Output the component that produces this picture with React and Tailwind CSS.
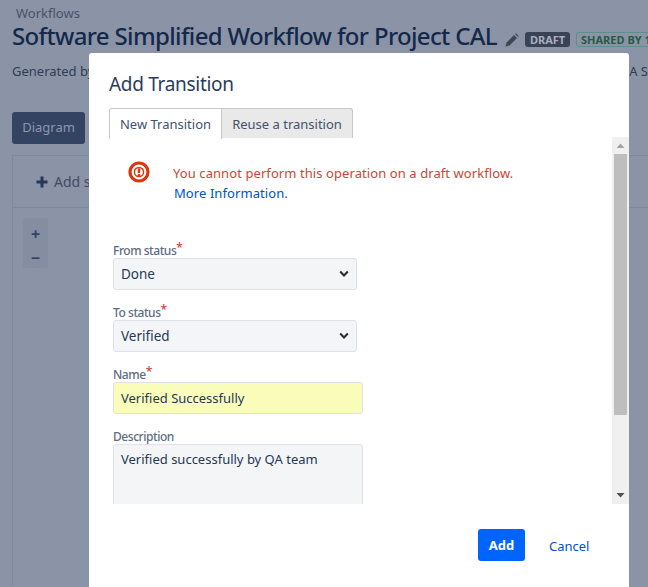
import React from "react";

const font = { fontFamily: '"Noto Sans", sans-serif' };

function Label({ children, required }) {
  return (
    <div className="h-[20px] pt-[5px] flex items-start text-[12px] leading-[15px] font-medium text-[#5e6c84] tracking-[-0.45px]">
      <span>{children}</span>
      {required && <span className="text-[#d04437] text-[12px] leading-[12px] -mt-[1px]">*</span>}
    </div>
  );
}

function Select({ value }) {
  return (
    <div className="w-[244px] h-[32px] bg-[#f4f5f7] border border-[#dfe1e6] rounded-[3px] flex items-center justify-between pl-[7px] pr-[7px] text-[13.5px] text-[#253858]">
      <span>{value}</span>
      <svg width="10" height="8" viewBox="0 0 10 8">
        <path d="M1.2 1.5 L5 5.5 L8.8 1.5" fill="none" stroke="#2b2b2b" strokeWidth="2" />
      </svg>
    </div>
  );
}

export default function App() {
  return (
    <div style={font} className="relative w-[648px] h-[587px] overflow-hidden bg-[#8b94a7]">
      <div className="pl-[12px] pt-[5px]">
        <div className="pl-[4px] text-[13px] leading-[16px] text-[#46526a]">Workflows</div>
        <div className="flex items-center h-[30px] whitespace-nowrap">
          <span className="shrink-0 text-[24px] leading-[30px] font-medium text-[#14284a] tracking-[-0.65px]">Software Simplified Workflow for Project CAL</span>
          <svg className="shrink-0 ml-[8px] mt-[8px]" width="14" height="14" viewBox="0 0 14 14">
            <path d="M0.5 13.5 L1.5 9.5 L9 2 L12 5 L4.5 12.5 Z M10 1 L11 0.3 L13.7 3 L13 4 Z" fill="#3f4657" />
          </svg>
          <span className="shrink-0 ml-[6px] mt-[7px] w-[45px] text-center h-[15px] rounded-[3px] bg-[#3a4356] text-[#a9b0bf] text-[11px] leading-[15px] font-bold">DRAFT</span>
          <span className="shrink-0 ml-[6px] mt-[7px] px-[4px] h-[15px] rounded-[3px] border border-[#5f8f8a] text-[#1f5c45] text-[11px] leading-[13px] font-bold">SHARED BY 1</span>
        </div>
        <div className="flex justify-between mt-[11px] text-[13px] leading-[18px] text-[#2f3c55] whitespace-nowrap">
          <span>Generated by</span>
          <span>A S</span>
        </div>
        <div className="mt-[32px] w-[73px] h-[32px] rounded-[3px] bg-[#334463] text-[#8d97ab] text-[13px] leading-[30px] text-center">Diagram</div>
      </div>
      <div className="mt-[11px] ml-[12px] h-[434px] border border-[#7f899c] border-r-0">
        <div className="h-[52px] border-b border-[#7f899c] flex items-center pl-[23px] text-[14px] text-[#3f4b63] whitespace-nowrap">
          <svg className="mr-[6px]" width="12" height="12" viewBox="0 0 12 12">
            <path d="M4.5 0.5h3v4h4v3h-4v4h-3v-4h-4v-3h4z" fill="#253858" />
          </svg>
          Add status
        </div>
        <div className="ml-[10px] mt-[10px] w-[25px] h-[50px] rounded-[3px] bg-[#858ea1] flex flex-col items-center gap-[6px] pt-[7px] text-[#2f4468] text-[16px] leading-[18px] font-bold">
          <span>+</span>
          <span>−</span>
        </div>
      </div>

      <div className="absolute left-[89px] top-[53px] w-[540px] h-[560px] bg-white rounded-t-[3px] flex flex-col">
        <div className="pl-[20px] pt-[17px] text-[19px] leading-[28px] text-[#2a3c5c] tracking-[-0.3px]">Add Transition</div>
        <div className="pl-[20px] pt-[10px] flex h-[40px] text-[13px]">
          <div className="w-[113px] h-[31px] border border-[#c8c8c8] border-b-0 rounded-tl-[3px] bg-white text-[#42526e] text-center leading-[30px]">New Transition</div>
          <div className="w-[131px] h-[30px] border border-l-0 border-[#c8c8c8] border-b-0 rounded-tr-[3px] bg-[#e9e9e9] text-[#42526e] text-center leading-[30px]">Reuse a transition</div>
        </div>
        <div className="relative h-[367px] -mt-[1px] overflow-hidden">
          <div className="flex pl-[39px] pt-[24px]">
            <svg width="22" height="22" viewBox="0 0 22 22" className="shrink-0">
              <circle cx="11" cy="11" r="9" fill="none" stroke="#de350b" strokeWidth="3.2" />
              <circle cx="11" cy="11" r="4.6" fill="none" stroke="#de350b" strokeWidth="1.5" />
              <rect x="9.8" y="7.4" width="2.4" height="4.6" fill="#de350b" />
              <rect x="9.8" y="13" width="2.4" height="1.9" fill="#de350b" />
            </svg>
            <div className="ml-[23px] pt-[2px] text-[13px] leading-[20px] tracking-[0.08px] whitespace-nowrap">
              <div className="text-[#d04437]">You cannot perform this operation on a draft workflow.</div>
              <div className="pl-[1px] text-[#0052cc]">More Information.</div>
            </div>
          </div>
          <div className="pl-[24px] pt-[35px]">
            <Label required>From status</Label>
            <Select value="Done" />
            <div className="h-[10px]" />
            <Label required>To status</Label>
            <Select value="Verified" />
            <div className="h-[10px]" />
            <Label required>Name</Label>
            <div className="w-[250px] h-[32px] bg-[#fafdb9] border border-[#dfe1e6] rounded-[3px] flex items-center pl-[7px] pt-[1px] text-[13px] text-[#253858]">Verified Successfully</div>
            <div className="h-[10px]" />
            <Label>Description</Label>
            <div className="w-[250px] h-[100px] bg-[#f4f5f7] border border-[#dfe1e6] rounded-[3px] pl-[7px] pt-[4px] text-[13px] leading-[20px] text-[#253858]">Verified successfully by QA team</div>
          </div>
          <div className="absolute right-0 top-0 bottom-0 w-[17px] bg-[#f0f0f0] flex flex-col items-center">
            <svg className="mt-[6px]" width="9" height="6" viewBox="0 0 9 6"><path d="M4.5 0.5 L8.5 5 H0.5 Z" fill="#a3a3a3" /></svg>
            <div className="mt-[5px] w-[13px] h-[261px] bg-[#bebebe]" />
            <div className="flex-1" />
            <svg className="mb-[6px]" width="9" height="6" viewBox="0 0 9 6"><path d="M0.5 1 H8.5 L4.5 5.5 Z" fill="#505050" /></svg>
          </div>
        </div>
        <div className="flex items-center pl-[389px] pt-[25px] text-[13px]">
          <div className="w-[47px] h-[32px] rounded-[3px] bg-[#0065ff] text-white font-bold text-center leading-[32px]">Add</div>
          <div className="ml-[24px] pt-[4px] text-[#0052cc]">Cancel</div>
        </div>
      </div>
    </div>
  );
}
